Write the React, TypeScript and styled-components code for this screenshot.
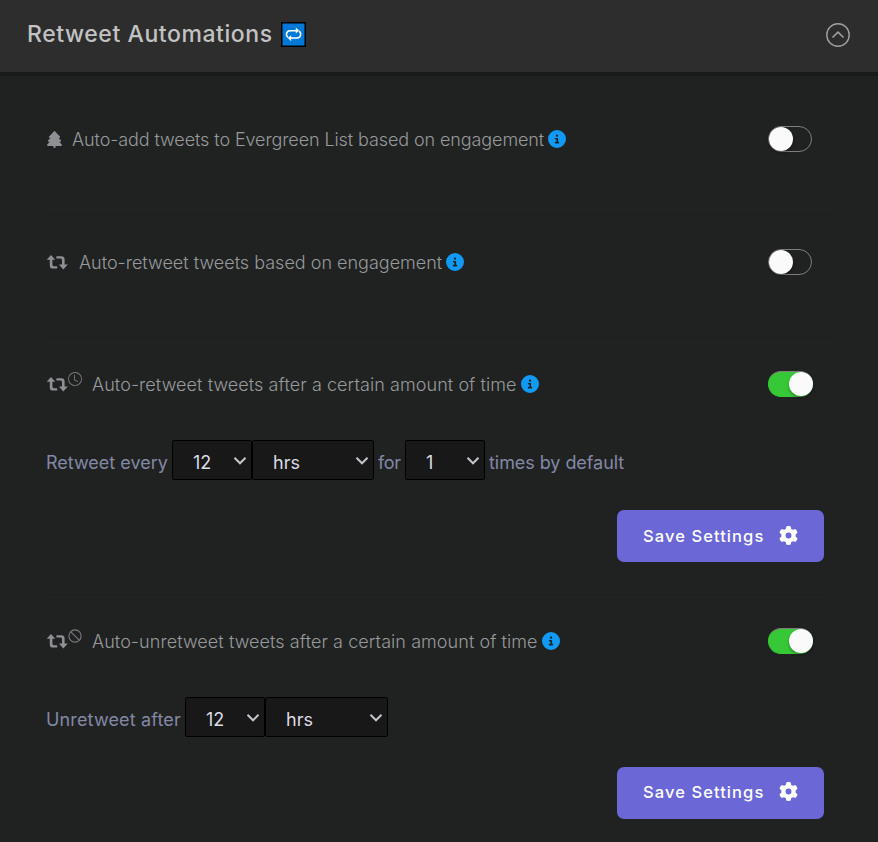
import React from 'react';
import styled, { createGlobalStyle } from 'styled-components';
import { FaTree, FaGear, FaCircleInfo } from 'react-icons/fa6';
import { BsClock } from 'react-icons/bs';

const GlobalStyle = createGlobalStyle`
  * { box-sizing: border-box; }
  body {
    margin: 0;
    height: 842px;
    overflow: hidden;
    background: #202221;
    font-family: Inter, "Noto Sans", sans-serif;
  }
  svg { display: block; flex: none; }
`;

const Header = styled.header`
  display: flex;
  align-items: center;
  justify-content: space-between;
  height: 76px;
  padding: 0 27px 4px 27px;
  background: #2d2d2d;
  border-bottom: 4px solid #191a1a;
`;

const Title = styled.h1`
  display: flex;
  align-items: center;
  margin: 0;
  font-size: 23px;
  font-weight: 500;
  line-height: 30px;
  letter-spacing: 0.57px;
  color: #c2c2c2;
`;

const Badge = styled.span`
  display: flex;
  margin-left: 8px;
`;

const CollapseButton = styled.button`
  display: flex;
  padding: 0;
  border: 0;
  background: none;
  margin-top: 2px;
`;

const Section = styled.section<{ $height: number; $top: number; $last?: boolean }>`
  height: ${p => p.$height}px;
  margin: 0 49px 0 46px;
  padding: ${p => p.$top}px 5px 0 0;
  border-bottom: ${p => (p.$last ? '0' : '1px dotted #1a1a1c')};
`;

const SettingRow = styled.div`
  display: flex;
  align-items: center;
  height: 28px;
  padding-right: 11px;
`;

const Icon = styled.span<{ $width: number }>`
  display: flex;
  width: ${p => p.$width}px;
  height: 28px;
  align-items: center;
  color: #8e9094;
`;

const Superscript = styled.span`
  display: flex;
  margin-top: -10px;
  font-size: 14px;
  color: #787a80;
`;

const Label = styled.span<{ $spacing: number }>`
  padding-top: 2px;
  font-size: 18px;
  font-weight: 300;
  line-height: 28px;
  letter-spacing: ${p => p.$spacing}px;
  white-space: nowrap;
  color: #97999c;
`;

const Info = styled.span`
  display: flex;
  margin-left: 4px;
  font-size: 18px;
  color: #109af5;
`;

const Switch = styled.button<{ $on: boolean }>`
  display: flex;
  justify-content: ${p => (p.$on ? 'flex-end' : 'flex-start')};
  width: ${p => (p.$on ? 45 : 44)}px;
  height: 26px;
  margin: ${p => (p.$on ? '0 0 0 auto' : '0 1px 0 auto')};
  padding: 0;
  border: 1px solid ${p => (p.$on ? '#37c837' : '#817d7b')};
  border-top-color: #817d7b;
  border-right-width: ${p => (p.$on ? 0 : 1)}px;
  border-radius: 13px;
  background: ${p => (p.$on ? '#37c837' : 'transparent')};
`;

const Knob = styled.span`
  width: 24px;
  height: 24px;
  border-radius: 50%;
  background: #fafafa;
  box-shadow: 0 2px 3px rgba(0, 0, 0, 0.3);
`;

const Controls = styled.div`
  display: flex;
  height: 40px;
  margin-top: 42px;
`;

const Words = styled.span<{ $width: number; $spacing?: number }>`
  width: ${p => p.$width}px;
  padding-top: 3px;
  font-size: 18px;
  line-height: 40px;
  letter-spacing: ${p => p.$spacing ?? 0}px;
  white-space: nowrap;
  color: #8388a6;
`;

const Select = styled.div<{ $width: number }>`
  display: flex;
  align-items: center;
  justify-content: space-between;
  width: ${p => p.$width}px;
  height: 40px;
  padding: 4px 4px 0 20px;
  border: 1px solid #000;
  border-radius: 2px;
  background: #181818;
  font-size: 18px;
  color: #dcdce4;

  svg { margin-top: -2px; }
`;

const Gap = styled.span`
  width: 4px;
`;

const SaveButton = styled.button<{ $lift: number }>`
  display: flex;
  align-items: center;
  width: 207px;
  height: 52px;
  margin: 30px 0 0 auto;
  padding: 0 26px ${p => p.$lift}px;
  border: 0;
  border-radius: 7px;
  background: #6c67d6;
  color: #fff;
  font: 500 16.5px Inter, sans-serif;
  letter-spacing: 1.08px;
  white-space: nowrap;

  svg { margin: -2px 0 0 auto; }
`;

const RetweetIcon = () => (
  <svg width="22" height="15" viewBox="0 0 22 15" fill="currentColor">
    <path d="M5 0 9.3 4.8H6.4V9.8Q6.4 11.2 7.8 11.2H11.2V13.6H7.2Q3.8 13.6 3.8 10.4V4.8H.7Z" />
    <path d="M10.4 1.2H15.2Q18.6 1.2 18.6 4.4V9.5H21.8L17.3 14.5 12.9 9.5H16V5Q16 3.6 14.6 3.6H10.4Z" />
  </svg>
);

const BanIcon = () => (
  <svg width="14" height="14" viewBox="0 0 14 14" fill="none" stroke="currentColor" strokeWidth="1.1">
    <circle cx="7" cy="7" r="6.1" />
    <path d="M2.8 2.8 11.2 11.2" />
  </svg>
);

const RepeatBadge = () => (
  <svg width="25" height="25" viewBox="0 0 25 25" fill="none">
    <rect width="25" height="25" fill="#000" />
    <rect x="1.5" y="1.5" width="22" height="22" fill="#0078d7" />
    <g stroke="#fff" strokeWidth="1.5">
      <path d="M7 15.4A3.7 3.7 0 0 1 9 8.7H16" />
      <path d="M18 9.2A3.7 3.7 0 0 1 16 16H9" />
    </g>
    <path d="M14.8 5.4 18.2 8.6 14.8 11.4ZM10.2 13.2V19.2L6.8 16Z" fill="#fff" />
  </svg>
);

const Chevron = () => (
  <svg width="14" height="10" viewBox="0 0 14 10" fill="none" stroke="#c4c4cb" strokeWidth="2">
    <path d="M1.5 1.8 7 7.3 12.5 1.8" />
  </svg>
);

const Toggle = ({ on = false }: { on?: boolean }) => (
  <Switch $on={on} role="switch" aria-checked={on}><Knob /></Switch>
);

const Dropdown = ({ value, width }: { value: string; width: number }) => (
  <Select $width={width}>{value}<Chevron /></Select>
);

const Save = ({ lift = 0 }: { lift?: number }) => (
  <SaveButton $lift={lift}>Save Settings<FaGear size={19} /></SaveButton>
);

type SettingProps = {
  icon: React.ReactNode;
  iconWidth: number;
  label: string;
  spacing: number;
  on?: boolean;
};

const Setting = ({ icon, iconWidth, label, spacing, on }: SettingProps) => (
  <SettingRow>
    <Icon $width={iconWidth}>{icon}</Icon>
    <Label $spacing={spacing}>{label}</Label>
    <Info><FaCircleInfo /></Info>
    <Toggle on={on} />
  </SettingRow>
);

export default function App() {
  return (
    <>
      <GlobalStyle />
      <Header>
        <Title>Retweet Automations<Badge><RepeatBadge /></Badge></Title>
        <CollapseButton aria-label="Collapse">
          <svg width="26" height="26" viewBox="0 0 26 26" fill="none" stroke="#a09f9c" strokeWidth="1.4">
            <circle cx="13" cy="13" r="11.2" />
            <path d="M7.5 15.5 13 10.2 18.5 15.5" strokeWidth="1.6" />
          </svg>
        </CollapseButton>
      </Header>
      <main>
        <Section $height={139} $top={49}>
          <Setting icon={<FaTree size={17} />} iconWidth={26} label="Auto-add tweets to Evergreen List based on engagement" spacing={-0.1} />
        </Section>
        <Section $height={123} $top={33}>
          <Setting icon={<RetweetIcon />} iconWidth={33} label="Auto-retweet tweets based on engagement" spacing={0} />
        </Section>
        <Section $height={257} $top={32}>
          <Setting icon={<><RetweetIcon /><Superscript><BsClock /></Superscript></>} iconWidth={46} label="Auto-retweet tweets after a certain amount of time" spacing={0.07} on />
          <Controls>
            <Words $width={126}>Retweet every</Words>
            <Dropdown value="12" width={80} />
            <Dropdown value="hrs" width={122} />
            <Gap />
            <Words $width={27} $spacing={-0.3}>for</Words>
            <Dropdown value="1" width={80} />
            <Gap />
            <Words $width={140} $spacing={-0.06}>times by default</Words>
          </Controls>
          <Save />
        </Section>
        <Section $height={247} $top={32} $last>
          <Setting icon={<><RetweetIcon /><Superscript><BanIcon /></Superscript></>} iconWidth={46} label="Auto-unretweet tweets after a certain amount of time" spacing={0.065} on />
          <Controls>
            <Words $width={139} $spacing={0.15}>Unretweet after</Words>
            <Dropdown value="12" width={80} />
            <Dropdown value="hrs" width={123} />
          </Controls>
          <Save lift={2} />
        </Section>
      </main>
    </>
  );
}
